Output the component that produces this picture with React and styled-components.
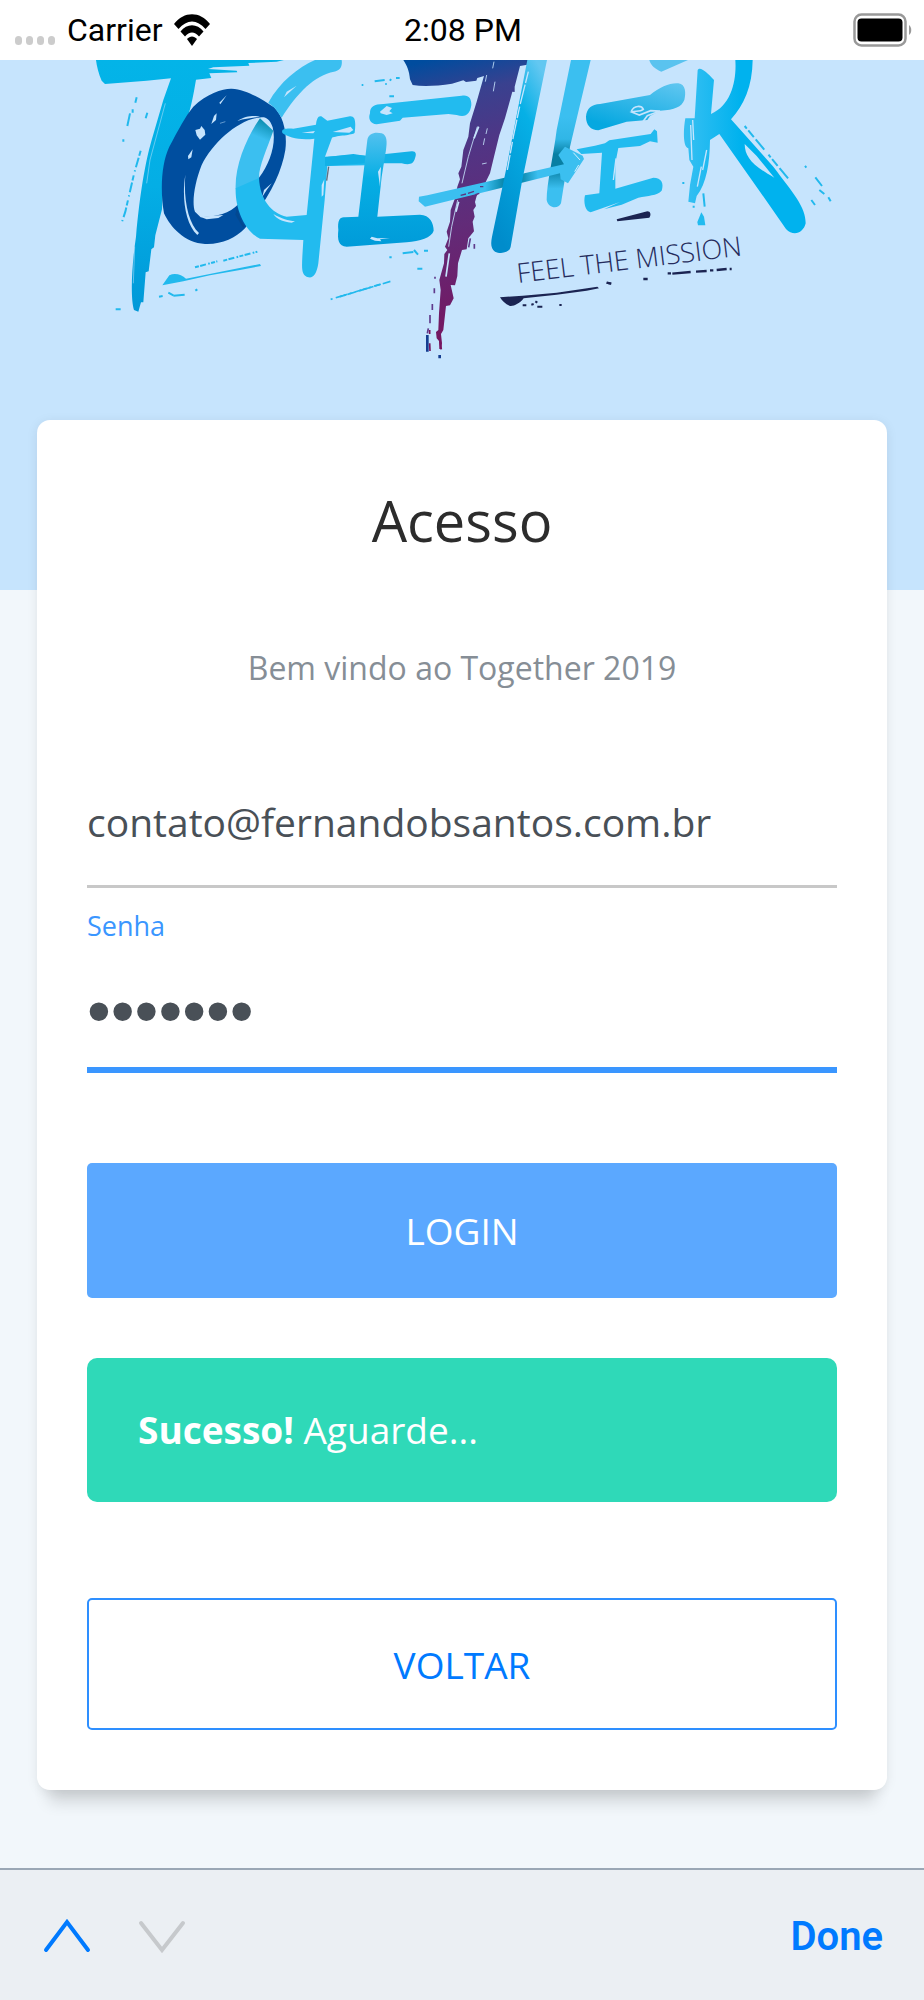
import React from "react";
import styled, { createGlobalStyle, css } from "styled-components";

const GlobalStyle = createGlobalStyle`
  *, *::before, *::after { box-sizing: border-box; }
  body {
    margin: 0;
    background: #f2f7fb;
    font-family: "Open Sans", "Noto Sans", sans-serif;
  }
  button, input { font-family: inherit; }
`;

const Screen = styled.div`
  display: flex;
  flex-direction: column;
  min-height: 100vh;
`;

const StatusBar = styled.header`
  display: grid;
  grid-template-columns: 1fr auto 1fr;
  align-items: center;
  height: 60px;
  padding: 0 12px 0 14px;
  background: #fff;
  color: #000;
  font-family: Roboto, sans-serif;
  font-size: 32px;
  line-height: 60px;
`;

const Network = styled.div`
  display: flex;
  align-items: center;
  gap: 11px;
`;

const StatusIcons = styled.div`
  display: flex;
  justify-content: flex-end;
`;

const Main = styled.main`
  flex: 1;
  padding-bottom: 76px;
`;

const Hero = styled.div`
  padding-bottom: 220px;
  background: #c6e4fd;

  svg {
    display: block;
    width: 100%;
    height: auto;
  }
`;

const Card = styled.form`
  position: relative;
  display: flex;
  flex-direction: column;
  margin: -170px 37px 0;
  padding: 64px 50px 60px;
  border-radius: 13px;
  background: #fff;
  box-shadow: 0 24px 16px -12px rgba(0, 0, 0, 0.14), 0 2px 12px rgba(0, 0, 0, 0.08);
`;

const Title = styled.h1`
  margin: 0;
  color: #2c2c2c;
  font-size: 56px;
  font-weight: 400;
  line-height: 72px;
  text-align: center;
`;

const Welcome = styled.p`
  margin: 88px 0 72px;
  color: #868e96;
  font-size: 32px;
  font-weight: 400;
  line-height: 48px;
  text-align: center;
`;

const TextField = styled.input`
  width: 100%;
  height: 124px;
  padding: 0 0 6px;
  border: 0;
  border-bottom: 3px solid #c8c8c8;
  border-radius: 0;
  outline: 0;
  background: transparent;
  color: #495057;
  font-size: 39px;
  line-height: 56px;
`;

const PasswordField = styled(TextField)`
  height: 127px;
  padding: 6px 0 0;
  border-bottom: 6px solid #3a96ff;
  font-family: "Liberation Sans", sans-serif;
  font-size: 68px;
`;

const FieldLabel = styled.label`
  margin-top: 18px;
  color: #3a96ff;
  font-size: 27px;
  line-height: 40px;
`;

const Button = styled.button`
  height: 135px;
  padding: 0;
  border: 0;
  border-radius: 5px;
  background: #5ba8ff;
  color: #fff;
  font-size: 37px;
  font-weight: 400;
  text-transform: uppercase;
  cursor: pointer;

  ${({ $outline }) =>
    $outline &&
    css`
      height: 132px;
      border: 2px solid #2e8fff;
      background: #fff;
      color: #007aff;
    `}
`;

const LoginButton = styled(Button)`
  margin-top: 90px;
`;

const Alert = styled.div`
  margin: 60px 0 96px;
  padding: 48px 51px;
  border-radius: 10px;
  background: #2fd9b8;
  color: #fff;
  font-size: 37px;
  font-weight: 400;
  line-height: 48px;

  strong { font-weight: 700; }
`;

const AccessoryBar = styled.footer`
  display: flex;
  align-items: center;
  justify-content: space-between;
  height: 132px;
  padding: 4px 41px 0 40px;
  border-top: 2px solid #9aa7b5;
  background: #ebeff3;
`;

const Arrows = styled.div`
  display: flex;
  gap: 41px;
`;

const ToolButton = styled.button`
  display: block;
  padding: 0;
  border: 0;
  background: transparent;
  color: ${({ disabled }) => (disabled ? "#c6c9cc" : "#007aff")};
  font-family: Roboto, sans-serif;
  font-size: 40px;
  font-weight: 600;
  line-height: 48px;
  cursor: pointer;

  svg { display: block; }
`;

function SignalDots() {
  return (
    <svg width="42" height="34" viewBox="0 0 42 34" aria-hidden="true">
      {[1, 12, 23, 34].map((x) => (
        <rect key={x} x={x} y="23" width="7" height="9" rx="3.5" fill="#ccc" />
      ))}
    </svg>
  );
}

function WifiIcon() {
  return (
    <svg width="36" height="34" viewBox="0 0 36 34" aria-hidden="true">
      <path d="M0 11C10-2 26-2 36 11L31.500 16C23 6 13 6 4.500 16Z" />
      <path d="M6.500 18.500C13 10 23 10 29.500 18.500L25 23.500C20.500 18 15.500 18 11 23.500Z" />
      <path d="M13 26C16 22.500 20 22.500 23 26L18 33Z" />
    </svg>
  );
}

function BatteryIcon() {
  return (
    <svg width="59" height="34" viewBox="0 0 59 34" aria-hidden="true">
      <rect x="1.500" y="1.500" width="51" height="31" rx="7" fill="none" stroke="#999" strokeWidth="2.500" />
      <rect x="4.500" y="5.500" width="45" height="23" rx="4" />
      <path d="M56 12c3 2 3 8 0 10Z" fill="#999" />
    </svg>
  );
}

function Logo() {
  return (
    <svg viewBox="0 60 924 310" role="img" aria-label="Together, feel the mission">
      <defs>
        <linearGradient id="cyan" x1="0" y1="0" x2="0" y2="1">
          <stop offset="0" stopColor="#03b4e8" />
          <stop offset=".5" stopColor="#04aee5" />
          <stop offset="1" stopColor="#0098d8" />
        </linearGradient>
        <linearGradient id="stem" x1="0" y1="0" x2="0" y2="1">
          <stop offset="0" stopColor="#52c1ef" />
          <stop offset=".4" stopColor="#06aee4" />
          <stop offset="1" stopColor="#009bd9" />
        </linearGradient>
        <linearGradient id="seven" gradientUnits="userSpaceOnUse" x1="230" y1="40" x2="420" y2="860">
          <stop offset="0" stopColor="#004c9e" />
          <stop offset=".14" stopColor="#39418f" />
          <stop offset=".35" stopColor="#523484" />
          <stop offset=".6" stopColor="#622b78" />
          <stop offset="1" stopColor="#76155f" />
        </linearGradient>
        <linearGradient id="pillar" x1=".8" y1="0" x2=".3" y2="1">
          <stop offset="0" stopColor="#62c7f1" />
          <stop offset=".3" stopColor="#06b0e6" />
          <stop offset="1" stopColor="#008ccb" />
        </linearGradient>
        <linearGradient id="hook" gradientUnits="userSpaceOnUse" x1="555" y1="205" x2="515" y2="295">
          <stop offset="0" stopColor="#0587a8" />
          <stop offset=".6" stopColor="#3bbff0" />
          <stop offset="1" stopColor="#3bbff0" />
        </linearGradient>
        <linearGradient id="post" gradientUnits="userSpaceOnUse" x1="0" y1="200" x2="0" y2="470">
          <stop offset="0" stopColor="#3bbff0" />
          <stop offset=".25" stopColor="#30b6e6" />
          <stop offset=".42" stopColor="#087fa3" />
          <stop offset=".58" stopColor="#087fa3" />
          <stop offset=".8" stopColor="#3bbff0" />
        </linearGradient>
        <linearGradient id="arrow" gradientUnits="userSpaceOnUse" x1="237" y1="0" x2="732" y2="0">
          <stop offset=".4" stopColor="#3bbff0" />
          <stop offset=".51" stopColor="#0a88ad" />
          <stop offset=".62" stopColor="#0a88ad" />
          <stop offset=".72" stopColor="#3bbff0" />
        </linearGradient>
        <linearGradient id="bar" x1="1" y1="0" x2=".4" y2="1">
          <stop offset="0" stopColor="#62c7f1" />
          <stop offset="1" stopColor="#06a8e0" />
        </linearGradient>
        <linearGradient id="leg" gradientUnits="userSpaceOnUse" x1="380" y1="0" x2="540" y2="0">
          <stop offset="0" stopColor="#35bff2" />
          <stop offset="1" stopColor="#00b2ee" />
        </linearGradient>
      </defs>

      <g transform="translate(80 50) scale(.33333)">
        <path fill="url(#cyan)" d="M48 30H612L590 35L505 39L508 47L400 52L384 57L470 62L472 67L388 70L394 84L348 89C341 130 335 165 322 205L250 400L246 478L226 556L222 592L214 598L206 664L197 667L190 757L183 757L175 785L162 780C150 740 156 640 168 560C180 430 195 340 215 270L250 150L273 85L200 92L75 102L65 92C56 72 50 48 48 30Z" />
        <path fill="#004e9f" fillRule="evenodd" d="M340 170C380 130 430 115 455 116C500 118 545 148 582 172C612 200 622 255 616 300C604 370 570 440 495 535C465 565 425 584 375 582C315 580 270 530 252 490C240 420 244 340 268 290C295 240 315 200 340 170ZM545 202C480 205 400 275 365 345C343 400 335 460 345 485L362 502C410 500 450 490 475 463L538 382C570 340 590 280 578 232C570 208 558 201 545 202Z" />
        <path fill="#3bbff0" d="M705 30H785C788 50 780 62 762 65C705 75 650 130 605 203L585 175L565 158C600 95 655 52 705 30Z" />
        <path fill="url(#hook)" d="M540 205L580 242C560 300 535 350 537 388L467 418C464 345 502 258 540 205Z" />
        <path fill="#22bbef" d="M537 384C540 450 575 490 620 500L680 495L703 266C660 272 625 262 608 250C600 236 620 234 640 236L708 224C710 205 715 196 724 199L742 212L810 199C826 198 828 215 824 248C818 256 770 256 756 263L735 320L820 314L860 317L858 346L742 348L734 450L715 640C710 672 700 685 685 682C665 675 665 660 667 620L670 570L540 566C490 540 465 470 467 415Z" />
        <path fill="#06437f" opacity=".45" d="M472 470L466 494L490 535L494 528C480 510 474 490 472 470Z" />
        <g fill="#c6e4fd">
          <path d="M346 240L360 236L364 228L374 240L376 254L360 269L350 256ZM440 136L421 163L418 158ZM410 190L408 210L394 222L402 198ZM338 298L334 322L325 328L324 318ZM316 374C310 450 325 520 357 549L352 555C315 520 305 440 316 374ZM472 213C495 197 525 196 540 200C515 204 495 205 472 213ZM665 248L705 243L700 250ZM758 246L812 230L820 240L808 248ZM580 492C605 507 625 511 645 514L635 518C605 515 590 506 580 492ZM650 107L612 142L620 125ZM725 405L733 388L730 435L725 440Z" />
          <path d="M360 500L430 495L415 504L380 508ZM575 400L560 420L547 440L552 420Z" />
        </g>
        <g fill="none" stroke="#c6e4fd" strokeWidth="1.500">
          <path d="M256 160L210 330L200 400M164 590L160 700M436 215L420 220" />
        </g>
        <path d="M746 350L740 392" stroke="#607080" strokeWidth="4" />
        <g fill="none" stroke="#22b9ed" strokeWidth="6">
          <path d="M170 142L166 158M158 178V188M150 190L142 228M202 188L197 205M130 268V275" />
          <path d="M182 302L162 372L136 485L124 522" strokeDasharray="16 6 30 9 4 12" />
          <path d="M345 652L412 634M430 632L532 605" strokeDasharray="12 4 18 7 5 4" />
          <path d="M237 740L248 738M265 728L280 736M280 737L314 734M346 722L352 718M107 778H122" />
          <path d="M752 748L900 703" strokeDasharray="6 10 20 5 12 7" strokeWidth="5" />
        </g>
        <path fill="#22b9ed" d="M247 706L268 676C285 668 305 674 318 686L490 652L540 642L543 648L480 660L390 676L310 694Z" />
      </g>

      <g transform="translate(340 50) scale(.33333)">
        <path fill="#22bbef" d="M90 190C90 170 102 162 130 162L365 137C385 133 395 145 394 165C390 192 378 204 350 195L325 192L188 203L180 212L110 223C90 222 84 205 90 190Z" />
        <path fill="#12b1e7" d="M-45 322L40 312L80 318L215 304C228 303 230 312 225 325C220 345 205 345 185 340L80 340L-45 348Z" />
        <path fill="url(#stem)" d="M82 270C85 250 105 245 125 250C141 255 142 275 138 300L125 380L112 500L240 494C270 494 281 520 281 542C275 563 240 573 200 577L20 590C-5 588 -8 570 -5 540C-8 510 0 500 15 502L55 500Z" />
        <path fill="#c6e4fd" d="M120 185L140 168L156 174L148 184L158 190L140 195L122 190ZM95 560L112 565L150 564L120 568L124 574L105 572L90 566ZM114 365L123 350L120 410Z" />
        <path fill="url(#seven)" d="M190 30H565L562 44L540 48L524 110L524 126L517 125L508 158L495 205L478 255L462 320L450 370L436 398L410 438L405 456L408 468L400 480L404 500L398 515L402 544L385 565L380 598L366 600L354 640L352 678L345 706L332 705L341 745L330 766L318 768L310 840L303 852L306 880L303 898L298 897L297 873L290 865L288 846L295 840L297 790L302 720L298 690L312 640L313 612L322 600L315 590L325 565L320 545L330 515L332 480L345 445L352 410L360 388L355 370L364 350L370 300L385 260L390 220L410 155L432 78L412 84L409 92L378 96L370 91L336 101C290 108 250 110 218 105L210 88C208 62 200 45 190 30Z" />
        <g fill="none" stroke="#c6e4fd" strokeWidth="2.500">
          <path d="M412 230L385 320L366 400M353 450L335 530L326 590M462 35L458 55M440 75L436 95M465 95L460 124M442 235L438 252M434 265L430 285M426 342L440 339" />
          <path strokeWidth="5" d="M416 230L402 265M356 455L348 485M328 610L318 680" />
        </g>
        <g fill="none" stroke="#5f3b8c" strokeWidth="5">
          <path d="M391 565L386 592M403 582V596M285 680V686M283 715V730M277 762V780M270 795V820M265 835L262 850" />
          <path d="M262 855V905M299 915V925" stroke="#143d91" strokeWidth="8" />
          <path d="M269 840V852M269 880L270 903M300 870L304 898" stroke="#76155f" />
        </g>
        <path fill="url(#post)" d="M693 30H752L690 290L663 460C655 478 625 476 620 450C620 400 640 320 650 240Z" />
        <path fill="url(#arrow)" d="M237 440L262 436L672 343L655 315L675 290L728 317L732 327L684 400L662 388L660 370L255 470L236 454Z" />
        <path d="M362 436L378 432M384 430L402 424M406 434L418 430M420 410H430" stroke="#5c3580" strokeWidth="4" />
        <path d="M700 308L720 330M704 365L716 345" stroke="#d6effc" strokeWidth="3" />
        <path fill="url(#pillar)" d="M562 30H621L545 400L512 590C508 610 480 612 465 605C452 595 452 580 456 560L500 350Z" />
        <path d="M565 65L540 165L520 260L502 360" fill="none" stroke="#c6e4fd" strokeWidth="4" strokeDasharray="35 5 60 8" />
        <g fill="none" stroke="#22b9ed" strokeWidth="6">
          <path d="M65 105H70M104 94L134 90M138 100V104M150 92L153 87M168 84H179M148 139H162" />
          <path d="M148 622H155M188 610L220 606M222 600L234 614M252 602H264M232 656H247" />
          <path d="M0 740L158 692" strokeDasharray="18 6 24 12 45 5" strokeWidth="5" />
        </g>
        <path fill="#1b2452" d="M480 742L548 737L650 728L772 710L777 715L740 722L650 734L551 745C540 760 520 770 510 768C495 762 486 752 480 742Z" />
        <path d="M548 766H559M574 764L581 762M586 754L592 758M592 770H607M658 765H665M800 698L813 701" stroke="#1b2452" strokeWidth="6" />
      </g>

      <g transform="translate(560 50) scale(.33333)">
        <path fill="#5ac3ef" d="M268 30H384L304 65C286 58 272 46 268 30Z" />
        <path fill="url(#bar)" d="M78 200C80 175 95 163 120 162L270 135C300 110 330 98 355 100C378 103 378 130 373 150C365 170 345 180 300 182L270 198L262 210L200 215L115 241C92 240 78 225 78 200Z" />
        <path d="M214 184C222 165 245 166 250 178C240 186 225 182 215 186L238 195L272 182L300 183L262 197L248 216" fill="none" stroke="#c6e4fd" strokeWidth="5" />
        <path fill="#22bbef" d="M50 298L105 287L135 280L148 271L272 252L283 238L291 244L293 278L270 274L240 288L175 294L166 340L166 416L280 383C305 383 312 400 305 422C290 438 265 436 235 443L185 464L132 478L180 456L92 487C75 485 70 455 75 436L118 430L126 308L64 312Z" />
        <path d="M168 325L160 390" stroke="#c6e4fd" strokeWidth="4" />
        <path fill="url(#leg)" fillRule="evenodd" d="M413 60C420 48 440 66 462 90L453 192C515 165 530 90 526 30H578C577 110 552 165 513 208L640 350C700 430 737 470 737 520C730 550 700 560 678 537L600 425L478 252L450 270C449 340 440 400 410 438L405 460L385 455L390 405L400 350L388 330L385 295C368 290 370 240 376 205L404 205ZM554 282C555 320 575 345 643 383L590 318Z" />
        <path d="M392 225L396 330M424 350L412 410M440 300L428 360M401 270L398 210" fill="none" stroke="#c6e4fd" strokeWidth="4" />
        <path fill="#22bbef" d="M424 487L432 500L436 526L414 526L412 516Z" />
        <g fill="none" stroke="#22b9ed" strokeWidth="6">
          <path d="M554 228L690 392" strokeDasharray="10 7 26 9 40 20" />
          <path d="M735 348L739 353M766 382L786 408M778 420L793 432M805 442L812 454M754 450L765 465M430 430L434 470M370 396V402M398 470H404" />
        </g>
        <path fill="#1b2452" d="M170 508L262 484C272 484 274 495 268 503L172 514Z" />
        <path d="M140 698L154 701M250 687H263M323 670H333M337 671L392 666M408 665L440 663M450 661H460M470 660L500 657M509 657H515" stroke="#1b2452" strokeWidth="7" />
      </g>

      <text
        transform="translate(518 283) rotate(-7)"
        fill="#252b5c"
        fontFamily="Open Sans, sans-serif"
        fontSize="27"
        fontWeight="300"
      >
        FEEL THE MISSION
      </text>
    </svg>
  );
}

function Chevron({ down }) {
  return (
    <svg width="54" height="40" viewBox="0 0 54 40" aria-hidden="true">
      <path
        d={down ? "M6 6L27 33L48 6" : "M6 33L27 5L48 33"}
        fill="none"
        stroke="currentColor"
        strokeWidth="4"
        strokeLinecap="round"
      />
    </svg>
  );
}

export default function App() {
  return (
    <Screen>
      <GlobalStyle />
      <StatusBar>
        <Network>
          <SignalDots />
          <span>Carrier</span>
          <WifiIcon />
        </Network>
        <time>2:08 PM</time>
        <StatusIcons>
          <BatteryIcon />
        </StatusIcons>
      </StatusBar>
      <Main>
        <Hero>
          <Logo />
        </Hero>
        <Card onSubmit={(event) => event.preventDefault()}>
          <Title>Acesso</Title>
          <Welcome>Bem vindo ao Together 2019</Welcome>
          <TextField
            type="email"
            aria-label="E-mail"
            defaultValue="contato@fernandobsantos.com.br"
          />
          <FieldLabel htmlFor="senha">Senha</FieldLabel>
          <PasswordField id="senha" type="password" defaultValue="1234567" />
          <LoginButton type="submit">Login</LoginButton>
          <Alert role="status">
            <strong>Sucesso!</strong> Aguarde...
          </Alert>
          <Button type="button" $outline>
            Voltar
          </Button>
        </Card>
      </Main>
      <AccessoryBar>
        <Arrows>
          <ToolButton type="button" aria-label="Campo anterior">
            <Chevron />
          </ToolButton>
          <ToolButton type="button" aria-label="Próximo campo" disabled>
            <Chevron down />
          </ToolButton>
        </Arrows>
        <ToolButton type="button">Done</ToolButton>
      </AccessoryBar>
    </Screen>
  );
}
